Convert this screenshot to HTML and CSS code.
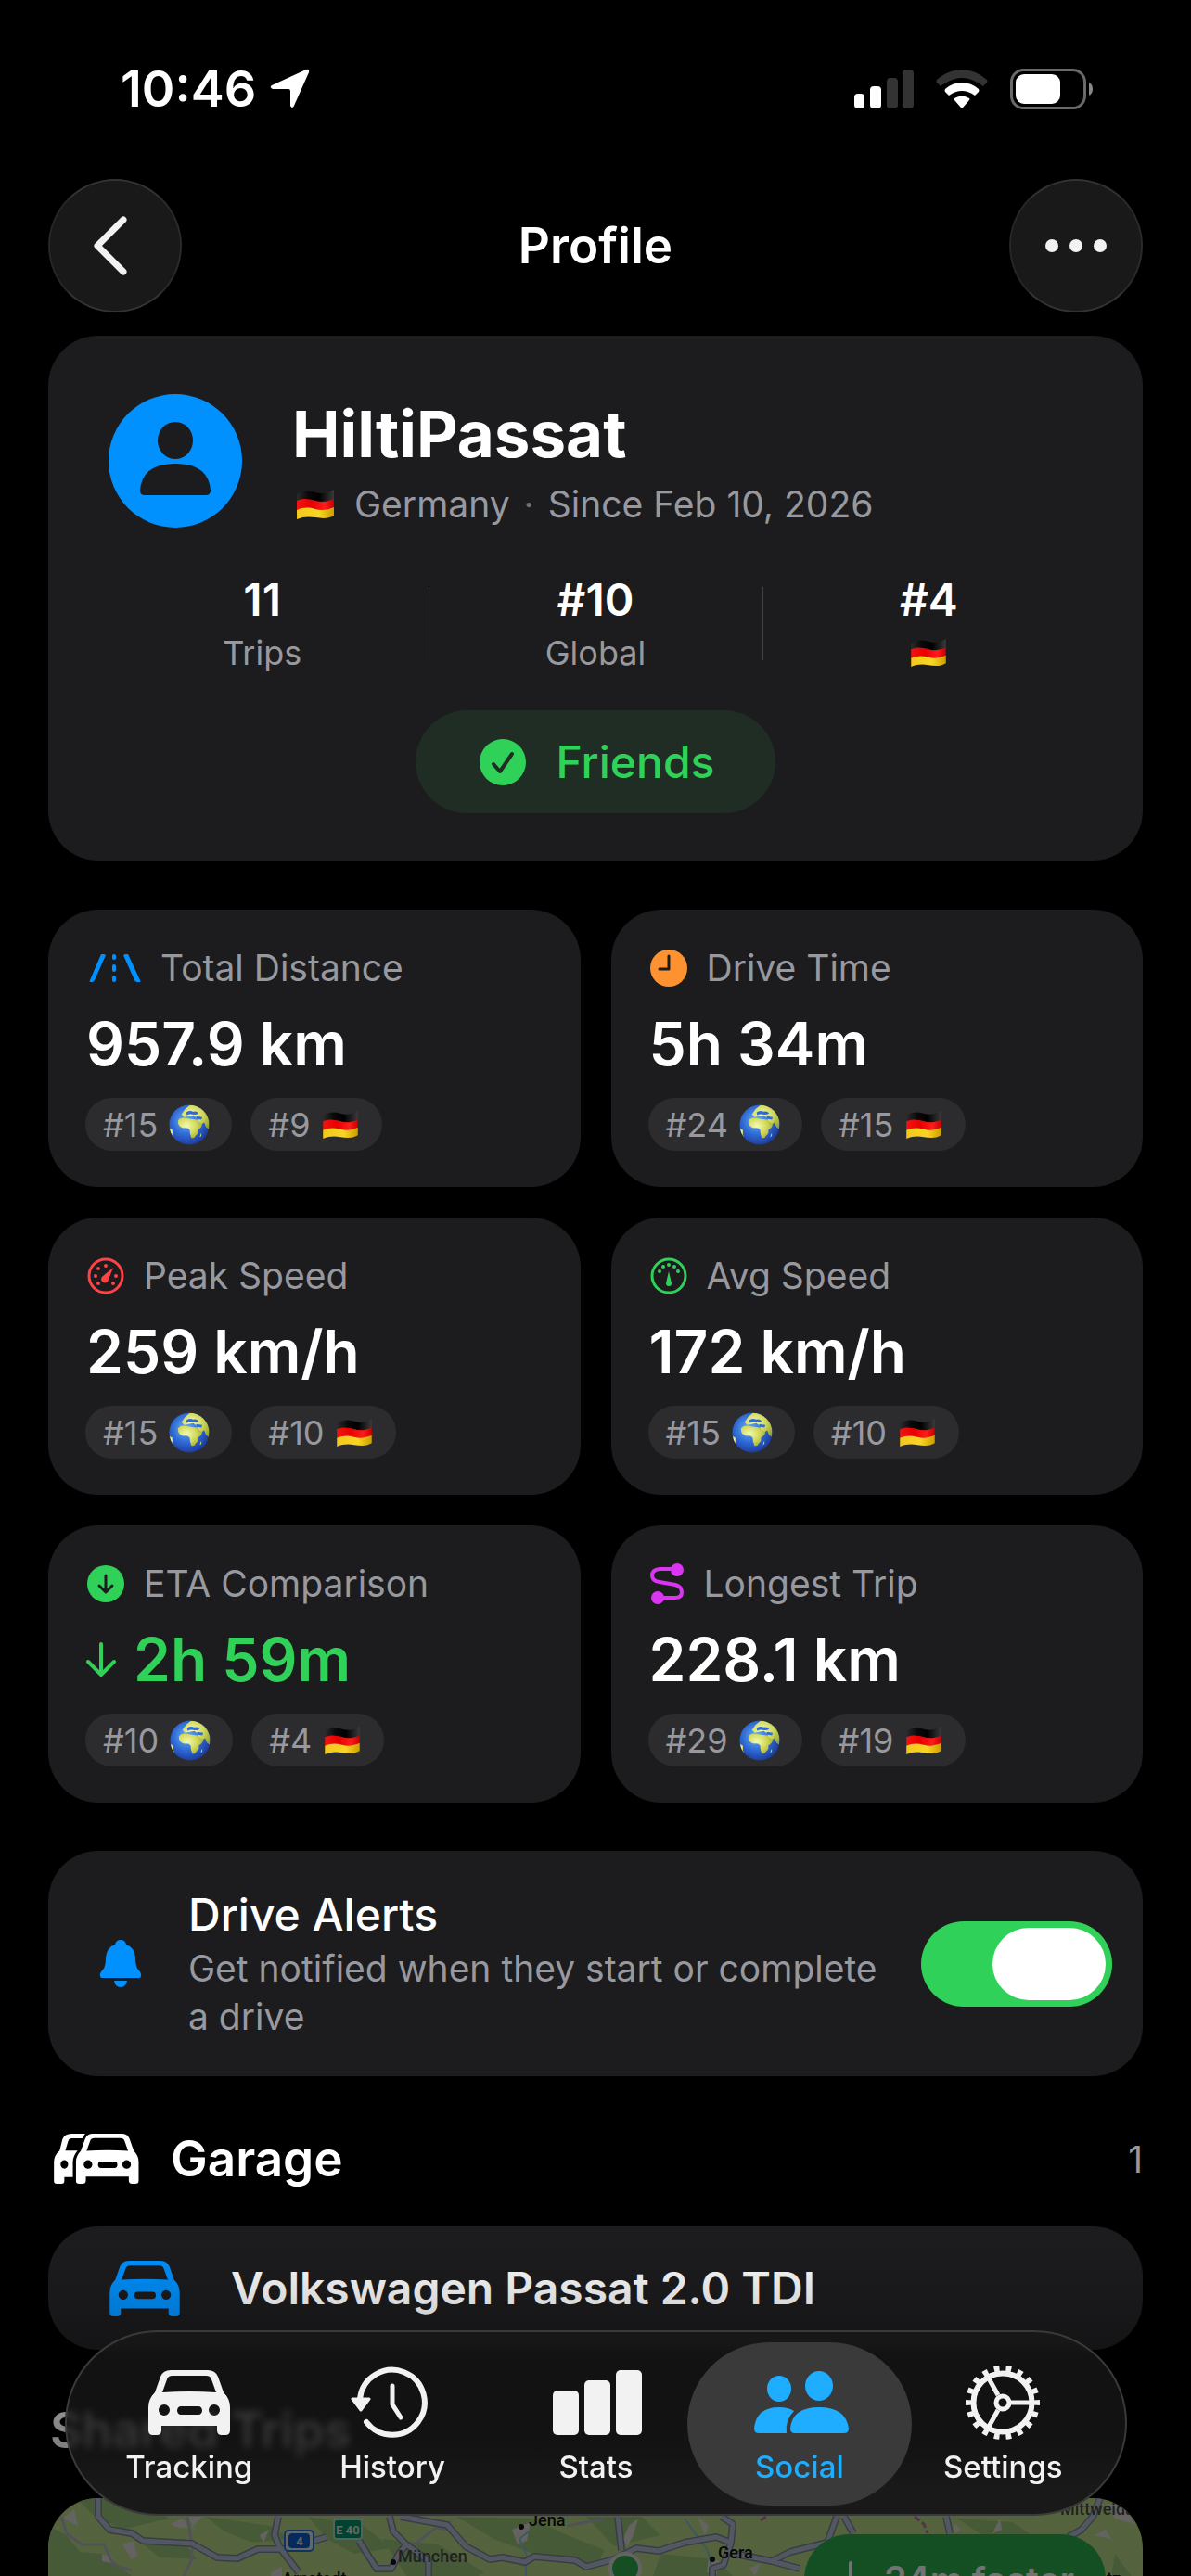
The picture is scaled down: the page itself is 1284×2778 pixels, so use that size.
FILE: index.html
```html
<!DOCTYPE html>
<html lang="en">
<head>
<meta charset="utf-8">
<meta name="viewport" content="width=device-width, initial-scale=1">
<title>Profile</title>
<link rel="stylesheet" href="styles.css">
</head>
<body>
<svg class="defs" aria-hidden="true">
  <defs>
    <linearGradient id="g-black" x1="0" x2="1"><stop offset="0" stop-color="#2b2b2b"/><stop offset=".3" stop-color="#0a0a0a"/><stop offset=".6" stop-color="#000"/><stop offset="1" stop-color="#3a3a3a"/></linearGradient>
    <linearGradient id="g-red" x1="0" x2="1"><stop offset="0" stop-color="#f01414"/><stop offset=".4" stop-color="#e80000"/><stop offset=".75" stop-color="#ff1c1c"/><stop offset="1" stop-color="#c80000"/></linearGradient>
    <linearGradient id="g-gold" x1="0" x2="1"><stop offset="0" stop-color="#f2c81c"/><stop offset=".6" stop-color="#fad524"/><stop offset="1" stop-color="#cc9d00"/></linearGradient>
    <radialGradient id="g-sea" cx=".42" cy=".4" r=".62"><stop offset="0" stop-color="#6fb4f2"/><stop offset=".55" stop-color="#2f6bd6"/><stop offset="1" stop-color="#1c3b9c"/></radialGradient>
    <radialGradient id="g-land" cx=".35" cy=".4" r=".8"><stop offset="0" stop-color="#f4fbb0"/><stop offset=".5" stop-color="#d3d95c"/><stop offset="1" stop-color="#8f9f2c"/></radialGradient>
    <clipPath id="c-globe"><circle cx="22.500" cy="22.500" r="22"/></clipPath>
    <symbol id="flag" viewBox="0 0 42 32">
      <path fill="url(#g-black)" d="M1 5C8 1 14 1 21 3S34 4 41 0V11C34 15 28 14 21 12S8 11 1 15Z"/>
      <path fill="url(#g-red)" d="M1 12C8 9 14 10 21 12S34 13 41 10V20C34 24 28 23 21 21S8 20 1 23Z"/>
      <path fill="url(#g-gold)" d="M1 22C8 19 14 19 21 21S34 22 41 19V28C34 32 28 31 21 30S8 29 1 32Z"/>
    </symbol>
    <symbol id="globe" viewBox="0 0 45 45">
      <circle cx="22.500" cy="22.500" r="22" fill="url(#g-sea)"/>
      <g clip-path="url(#c-globe)" fill="url(#g-land)">
        <path d="M10 18Q13 14 18 15L24 16L31 17Q33 21 37 22Q36 26 32 28Q33 32 30 34Q28 38 25 37Q23 33 23 28Q21 25 16 26Q10 25 10 18Z"/>
        <path d="M14 11L18 5L23 1H34L43 8L45 16L44 27L41 25L39 20L36 22L32 19L31 15L27 12L22 13L17 14Z"/>
        <path d="M0 26L4 28L4 33L6 39L0 36Z"/>
        <path d="M36 31L34 36L36 35Z"/>
      </g>
      <path d="M19 9Q22 6 27 8Q31 7 33 10Q30 12 26 11T20 12ZM30 13L37 14L36 17L31 16Z" fill="#2f6bd6"/>
    </symbol>
    <symbol id="car" viewBox="0 0 88 70">
      <path fill-rule="evenodd" d="M24 0H64Q72 0 75 7L81 24Q88 31 88 40V65Q88 70 83 70H79Q74 70 74 65V60H14V65Q14 70 9 70H5Q0 70 0 65V40Q0 31 7 24L13 7Q16 0 24 0ZM26 6Q21 6 20 10L15 24Q44 22 73 24L68 10Q67 6 62 6ZM17 37A6 6 0 1 0 17 49A6 6 0 1 0 17 37ZM71 37A6 6 0 1 0 71 49A6 6 0 1 0 71 37ZM35 39A4 4.500 0 0 0 35 48H54A4 4.500 0 0 0 54 39Z"/>
    </symbol>
  </defs>
</svg>

<div class="screen">
  <div class="status">
    <div class="status-left">
      <span class="time">10:46</span>
      <svg width="44" height="44" viewBox="0 0 44 44" fill="#fff"><path d="M40 1Q44 0 43 4L27 40Q25 44 23 40V24Q23 22 21 22H4Q0 20 3 18Z"/></svg>
    </div>
    <div class="status-right">
      <svg width="64" height="42" viewBox="0 0 64 42"><rect x="0" y="26" width="11" height="16" rx="4" fill="#fff"/><rect x="17" y="18" width="12" height="24" rx="4" fill="#fff"/><rect x="35" y="9" width="12" height="33" rx="4" fill="#333"/><rect x="52" y="0" width="12" height="42" rx="4" fill="#333"/></svg>
      <svg width="56" height="42" viewBox="0 0 56 42"><path fill="#333" d="M1 11Q14 0 28 0T55 11Q56 13 55 14L51 18Q39 9 28 9T5 18L1 14Q0 13 1 11Z"/><path fill="#fff" d="M10 21Q18 14 28 14T46 21Q47 23 46 24L42 28Q35 23 28 23T14 28L10 24Q9 23 10 21ZM20 31Q28 26 36 31Q37 32 36 33L29 41Q28 42 27 41L20 33Q19 32 20 31Z"/></svg>
      <svg width="90" height="44" viewBox="0 0 90 44"><rect x="1.500" y="1.500" width="79" height="41" rx="13" fill="none" stroke="#6a686a" stroke-width="3"/><rect x="6" y="6" width="48" height="32" rx="9" fill="#fff"/><path d="M85 15Q89 17 89 22T85 29Z" fill="#8a888a"/></svg>
    </div>
  </div>

  <header class="nav">
    <button class="round" type="button" aria-label="Back"><svg width="50" height="66" viewBox="0 0 50 66"><path d="M34 5L6 33L34 61" fill="none" stroke="#f2f2f2" stroke-width="7" stroke-linecap="round" stroke-linejoin="round"/></svg></button>
    <h1>Profile</h1>
    <button class="round" type="button" aria-label="More"><svg width="66" height="14" viewBox="0 0 66 14" fill="#f2f2f2"><circle cx="7" cy="7" r="7"/><circle cx="33" cy="7" r="7"/><circle cx="59" cy="7" r="7"/></svg></button>
  </header>

  <main>
    <section class="card profile">
      <div class="who">
        <svg width="144" height="144" viewBox="0 0 144 144"><circle cx="72" cy="72" r="72" fill="#0091ff"/><ellipse cx="72" cy="50" rx="19" ry="20" fill="#1c1c1e"/><path fill="#1c1c1e" d="M34 104Q36 75 72 75T110 104Q110 109 105 109H39Q34 109 34 104Z"/></svg>
        <div>
          <h2>HiltiPassat</h2>
          <p class="since"><svg width="44" height="32"><use href="#flag"/></svg><span>Germany</span><span class="dot">·</span><span>Since Feb 10, 2026</span></p>
        </div>
      </div>
      <div class="ranks">
        <div><strong>11</strong><span>Trips</span></div>
        <div><strong>#10</strong><span>Global</span></div>
        <div><strong>#4</strong><span><svg width="42" height="30"><use href="#flag"/></svg></span></div>
      </div>
      <button class="friends" type="button"><svg width="50" height="50" viewBox="0 0 50 50"><circle cx="25" cy="25" r="25" fill="#30d158"/><path d="M15 27L22 35L35 16" fill="none" stroke="#1f2d24" stroke-width="4" stroke-linecap="round" stroke-linejoin="round"/></svg>Friends</button>
    </section>

    <section class="grid">
      <article class="card stat">
        <h3><svg width="58" height="32" viewBox="0 0 58 32" fill="none" stroke="#0091ff" stroke-linecap="round"><path fill="#0091ff" stroke="none" d="M15 1H18L20 2L8 29Q7 31 5 31H3Q2 31 3 29ZM44 1H41L39 2L51 29Q52 31 54 31H57Q58 31 57 29Z"/><path stroke-width="4" d="M29 3V5M29 14V18M29 26V29"/></svg>Total Distance</h3>
        <p class="value">957.9 km</p>
        <ul><li>#15 <svg width="44" height="44"><use href="#globe"/></svg></li><li>#9 <svg width="42" height="30"><use href="#flag"/></svg></li></ul>
      </article>
      <article class="card stat">
        <h3><svg width="40" height="40" viewBox="0 0 40 40"><circle cx="20" cy="20" r="20" fill="#ff9230"/><path d="M20 7V21H10" fill="none" stroke="#1c1c1e" stroke-width="3" stroke-linecap="round" stroke-linejoin="round"/></svg>Drive Time</h3>
        <p class="value">5h 34m</p>
        <ul><li>#24 <svg width="44" height="44"><use href="#globe"/></svg></li><li>#15 <svg width="42" height="30"><use href="#flag"/></svg></li></ul>
      </article>
      <article class="card stat">
        <h3><svg width="40" height="40" viewBox="0 0 40 40" fill="#ff4245"><circle cx="20" cy="20" r="18" fill="none" stroke="#ff4245" stroke-width="3"/><path d="M28 11L23 24A4 4 0 1 1 17 20Z"/><circle cx="20" cy="9" r="2"/><circle cx="12" cy="12" r="2"/><circle cx="9" cy="20" r="2"/><circle cx="31" cy="20" r="2"/><circle cx="12" cy="28" r="2"/><circle cx="28" cy="28" r="2"/></svg>Peak Speed</h3>
        <p class="value">259 km/h</p>
        <ul><li>#15 <svg width="44" height="44"><use href="#globe"/></svg></li><li>#10 <svg width="42" height="30"><use href="#flag"/></svg></li></ul>
      </article>
      <article class="card stat">
        <h3><svg width="40" height="40" viewBox="0 0 40 40" fill="#30d158"><circle cx="20" cy="20" r="18" fill="none" stroke="#30d158" stroke-width="3"/><path d="M20 15L23 28A3 3 0 0 1 17 28Z"/><circle cx="20" cy="8" r="2"/><circle cx="14" cy="10" r="2"/><circle cx="26" cy="10" r="2"/><circle cx="10" cy="15" r="2"/><circle cx="30" cy="15" r="2"/></svg>Avg Speed</h3>
        <p class="value">172 km/h</p>
        <ul><li>#15 <svg width="44" height="44"><use href="#globe"/></svg></li><li>#10 <svg width="42" height="30"><use href="#flag"/></svg></li></ul>
      </article>
      <article class="card stat">
        <h3><svg width="40" height="40" viewBox="0 0 40 40"><circle cx="20" cy="20" r="20" fill="#30d158"/><path d="M20 11V29M13 22L20 29L27 22" fill="none" stroke="#1c1c1e" stroke-width="3" stroke-linecap="round" stroke-linejoin="round"/></svg>ETA Comparison</h3>
        <p class="value good"><svg width="32" height="38" viewBox="0 0 32 38"><path d="M16 2V35M2 21L16 35L30 21" fill="none" stroke="#30d158" stroke-width="4" stroke-linecap="round" stroke-linejoin="round"/></svg>2h 59m</p>
        <ul><li>#10 <svg width="44" height="44"><use href="#globe"/></svg></li><li>#4 <svg width="42" height="30"><use href="#flag"/></svg></li></ul>
      </article>
      <article class="card stat">
        <h3><svg width="37" height="44" viewBox="0 0 37 44"><path d="M29 6H10Q2 7 2 13T10 20L27 23Q34 25 34 31T27 37H8" fill="none" stroke="#db34f2" stroke-width="4"/><circle cx="29" cy="7" r="7" fill="#db34f2"/><circle cx="8" cy="37" r="7" fill="#db34f2"/></svg>Longest Trip</h3>
        <p class="value">228.1 km</p>
        <ul><li>#29 <svg width="44" height="44"><use href="#globe"/></svg></li><li>#19 <svg width="42" height="30"><use href="#flag"/></svg></li></ul>
      </article>
    </section>

    <section class="card alerts">
      <svg width="54" height="52" viewBox="0 0 54 52" fill="#0091ff"><path d="M27 0Q32 0 33 5Q42 8 43 19Q43 29 46 32Q50 36 49 39Q49 41 46 41H8Q5 41 5 39Q4 36 8 32Q11 29 11 19Q12 8 21 5Q22 0 27 0ZM20 44H34Q33 51 27 51T20 44Z"/></svg>
      <label for="alerts"><strong>Drive Alerts</strong><span>Get notified when they start or complete a drive</span></label>
      <input id="alerts" class="switch" type="checkbox" role="switch" checked>
    </section>

    <div class="heading">
      <svg width="92" height="54" viewBox="0 0 90 53" fill="#fff"><path fill-rule="evenodd" d="M33 0H19Q11 0 9 6L6 18Q0 23 0 30V50Q0 53 3 53H8Q11 53 11 50V46H20V30Q20 24 25 18L12 18L15 8Q16 5 19 5H30ZM11 28A4 4.500 0 1 0 11 37A4 4.500 0 1 0 11 28Z"/><svg x="23" y="0" width="67" height="53"><use href="#car"/></svg></svg>
      <h2>Garage</h2>
      <span class="count">1</span>
    </div>
    <section class="card vehicle">
      <svg width="76" height="60" fill="#0091ff"><use href="#car"/></svg>
      <strong>Volkswagen Passat 2.0 TDI</strong>
    </section>

    <div class="heading shared"><h2>Shared Trips</h2></div>
    <section class="map">
      <svg class="terrain" width="1180" height="260" viewBox="0 0 1180 260" preserveAspectRatio="xMidYMin slice" aria-hidden="true">
        <rect width="1180" height="260" fill="#bbdc88"/>
        <g fill="#9cc87c">
          <path d="M0 30L20 40L34 58L60 60L90 84L120 100V260H0Z"/><path d="M30 0H110L130 22L80 34L50 20Z"/><path d="M90 40L150 52L160 66L120 64ZM170 20L240 30L260 44L220 48L190 36Z"/>
          <path d="M280 20L340 30L370 54L330 60L300 44ZM360 44L420 50L470 80L440 100L390 90Z"/><path d="M440 20L520 22L560 40L600 56L590 76L540 66L480 44Z"/><path d="M580 20H640L660 40L610 52ZM660 60L720 66L740 86L690 100L650 90Z"/><path d="M980 22L1040 26L1060 40L1010 42ZM1150 60L1172 90L1160 110L1146 84Z"/>
        </g>
        <g fill="#dedcd6">
          <path d="M16 22L28 12L32 30ZM132 28L144 22L158 34L150 20H166L154 32L140 32ZM80 50L92 46L96 62L90 66ZM58 60L70 64L68 70L58 68ZM228 40L238 34L232 48ZM240 80L252 74V90H240Z"/>
          <path d="M500 34L520 26L516 46L506 50ZM620 44L626 30L636 22L630 42L624 52ZM700 20L712 30L708 40ZM976 26L984 34L978 38ZM1018 38L1026 22L1028 34ZM1128 40L1140 34L1146 44ZM756 76L768 70L762 84ZM1140 6L1160 8L1172 28L1150 22ZM712 64L724 68L720 84L710 80Z"/>
        </g>
        <path d="M686 22Q700 42 708 52T716 100M518 36L508 44L516 62L514 100" fill="none" stroke="#86c1d8" stroke-width="2"/>
        <g fill="none" stroke="#b4b6c4" stroke-width="3">
          <path d="M14 20L20 38L36 50L60 50L70 72L90 78M150 20L155 50V66L146 84M392 52L418 32L430 34L434 24M560 30L600 22"/>
        </g>
        <path d="M934 20L944 28L948 38M768 24L774 20" fill="none" stroke="#b07a9c" stroke-width="3" stroke-dasharray="7 3"/>
        <g fill="none" stroke="#7d8699" stroke-width="8" stroke-linejoin="round">
          <path id="roads" d="M54 0V20L66 34L90 38L102 46L155 49L182 64L204 65L226 55H256L300 42M248 20L244 40L250 54L270 80M335 46L354 76H370L378 60L386 50L372 36L368 20M386 50L410 68V90M380 20L430 29L450 52L476 66L490 64L514 69L524 63L568 67L580 74L610 66L634 54L658 57L686 48L720 42L736 48L738 28L726 20M736 48L728 72L716 76V100M740 60L780 68L810 76M780 68L800 58L840 48L850 20M858 20L868 38M614 20L618 56M968 20L972 38M1134 0L1126 20L1114 34L1100 42"/>
        </g>
        <use href="#roads" fill="none" stroke="#b6c1d8" stroke-width="5" stroke-linejoin="round"/>
        <g class="places">
          <circle cx="510" cy="31" r="3"/><text x="518" y="30">Jena</text>
          <circle cx="372" cy="69" r="3"/><text class="quiet" x="377" y="69">München</text>
          <text x="252" y="93">Arnstadt</text>
          <circle cx="716" cy="66" r="3"/><text x="722" y="65">Gera</text>
          <text class="quiet" x="1091" y="18">Mittweida</text>
          <text x="1141" y="93">tz</text>
        </g>
        <rect x="255" y="35" width="31" height="22" rx="4" fill="#dbe4ea" stroke="#2273d8" stroke-width="2"/><rect x="259" y="38" width="23" height="16" rx="4" fill="#0b5fd0"/><text class="shield" x="271" y="51">4</text>
        <rect x="308" y="23" width="30" height="21" rx="3" fill="#00956a" stroke="#b6dcc8" stroke-width="2"/><text class="shield" x="323" y="39">E 40</text>
        <circle cx="622" cy="76" r="16" fill="#2cae4c" stroke="#dcdcdc" stroke-width="4"/>
      </svg>
      <div class="faster"><svg width="32" height="38" viewBox="0 0 32 38"><path d="M16 2V35M2 21L16 35L30 21" fill="none" stroke="#fff" stroke-width="4" stroke-linecap="round" stroke-linejoin="round"/></svg>24m faster</div>
    </section>
  </main>

  <div class="fade"></div>
  <nav class="tabs">
    <a href="#tracking"><svg width="88" height="80" viewBox="0 0 88 70" fill="#f2f2f2"><use href="#car"/></svg>Tracking</a>
    <a href="#history"><svg width="90" height="80" viewBox="-1 -2 90 80" fill="none" stroke="#f2f2f2" stroke-width="6" stroke-linecap="round" stroke-linejoin="round"><path d="M9 34A35 35 0 1 1 16 59"/><path stroke-width="5" d="M44 20V40L53 54"/><path fill="#f2f2f2" stroke-width="3" d="M1 34H19L10 46Z"/></svg>History</a>
    <a href="#stats"><svg width="100" height="80" viewBox="-4 0 100 80" fill="#f2f2f2"><rect x="0" y="27" width="28" height="48" rx="5"/><rect x="34" y="16" width="28" height="59" rx="5"/><rect x="68" y="5" width="28" height="70" rx="5"/></svg>Stats</a>
    <a href="#social" class="on" aria-current="page"><svg width="106" height="80" viewBox="-4 -6 106 80" fill="#1eadff"><ellipse cx="27" cy="19" rx="13" ry="14"/><ellipse cx="70" cy="16" rx="15" ry="16"/><path d="M39 62Q41 39 70 39T102 62Q102 67 97 67H44Q39 67 39 62ZM0 62Q2 39 27 39Q37 39 43 43Q33 53 35 67H5Q0 67 0 62Z"/></svg>Social</a>
    <a href="#settings"><svg width="82" height="80" viewBox="0 0 82 80" fill="none" stroke="#f2f2f2"><circle cx="41" cy="40" r="36.500" stroke-width="7" pathLength="18" stroke-dasharray=".45 .55" stroke-dashoffset=".225"/><circle cx="41" cy="40" r="31.500" stroke-width="6"/><circle cx="41" cy="40" r="7" stroke-width="5"/><path stroke-width="5" d="M50 40H71M36 32L26 14M36 48L26 66"/></svg>Settings</a>
  </nav>
</div>
</body>
</html>
```

FILE: styles.css
```css
* { box-sizing: border-box; margin: 0; padding: 0; }

body {
  background: #000;
  color: #fff;
  font-family: Inter, "Liberation Sans", sans-serif;
}

.defs { position: absolute; width: 0; height: 0; }
svg { flex: none; display: block; }
button { border: 0; font: inherit; }
ul { list-style: none; }

.screen { position: relative; height: 100vh; overflow: hidden; }

.status {
  display: flex;
  justify-content: space-between;
  align-items: center;
  padding: 64px 105px 65px 130px;
}
.status-left { display: flex; align-items: center; gap: 14px; }
.status-right { display: flex; align-items: center; gap: 24px; }
.time { font-size: 54px; font-weight: 600; line-height: 64px; }

.nav {
  display: flex;
  justify-content: space-between;
  align-items: center;
  padding: 0 52px;
}
.nav h1 { font-size: 53px; font-weight: 600; line-height: 64px; }
.round {
  display: grid;
  place-items: center;
  width: 144px;
  height: 144px;
  border-radius: 72px;
  border: 2px solid #333;
  border-left-color: #262626;
  border-right-color: #2a2a2a;
  background: #191919;
}

main { padding: 25px 52px 0; }

.card { background: #1c1c1e; border-radius: 54px; }

.profile {
  display: flex;
  flex-direction: column;
  align-items: stretch;
  padding: 63px 51px 51px;
}
.who { display: flex; align-items: center; gap: 54px; padding-left: 14px; }
.who h2 { font-size: 69px; font-weight: 700; line-height: 84px; }
.since {
  display: flex;
  align-items: center;
  gap: 15px;
  margin-top: 10px;
  color: #98989f;
  font-size: 39px;
  line-height: 48px;
}
.since svg { margin: 0 5px 0 3px; }
.dot { color: #6e6e74; }
.ranks { display: grid; grid-template-columns: repeat(3, 1fr); margin-top: 48px; }
.ranks div { position: relative; display: flex; flex-direction: column; align-items: center; }
.ranks div + div::before {
  content: "";
  position: absolute;
  left: 0;
  top: 16px;
  bottom: 18px;
  width: 1px;
  background: #414144;
}
.ranks strong { font-size: 48px; font-weight: 600; line-height: 60px; }
.ranks span {
  display: flex;
  align-items: center;
  height: 53px;
  color: #98989f;
  font-size: 36px;
  line-height: 52px;
}
.friends {
  display: flex;
  align-items: center;
  align-self: center;
  gap: 33px;
  height: 111px;
  margin-top: 36px;
  padding: 0 66px 0 69px;
  border-radius: 56px;
  background: #1f2d24;
  color: #30d158;
  font-size: 48px;
  font-weight: 500;
}

.grid {
  display: grid;
  grid-template-columns: 1fr 1fr;
  gap: 33px;
  margin-top: 53px;
}
.stat { padding: 39px 40px 38px; }
.stat h3 {
  display: flex;
  align-items: center;
  gap: 21px;
  height: 48px;
  padding-left: 2px;
  color: #98989f;
  font-size: 39px;
  font-weight: 400;
  line-height: 48px;
}
.value {
  display: flex;
  align-items: center;
  gap: 19px;
  margin-top: 18px;
  padding-left: 1px;
  font-size: 64px;
  font-weight: 600;
  line-height: 80px;
}
.good { color: #30d158; }
.stat ul { display: flex; gap: 20px; margin-top: 18px; }
.stat li {
  display: flex;
  align-items: center;
  gap: 12px;
  height: 57px;
  margin-bottom: 1px;
  padding: 0 24px 0 19px;
  border-radius: 29px;
  background: #2c2c2e;
  color: #98989f;
  font-size: 36px;
}

.alerts {
  display: flex;
  align-items: center;
  margin-top: 52px;
  padding: 39px 33px 38px 51px;
}
.alerts label { flex: 1; margin: 0 40px 0 46px; }
.alerts strong { display: block; margin-bottom: 2px; font-size: 48px; font-weight: 500; line-height: 60px; }
.alerts span { display: block; color: #98989f; font-size: 39px; line-height: 52px; }
.switch {
  appearance: none;
  flex: none;
  display: flex;
  justify-content: flex-end;
  width: 206px;
  height: 92px;
  padding: 7px;
  border-radius: 46px;
  background: #30d158;
}
.switch::before { content: ""; width: 122px; border-radius: 39px; background: #fff; }
.switch:not(:checked) { justify-content: flex-start; background: #39393d; }

.heading {
  display: flex;
  align-items: center;
  gap: 34px;
  margin: 57px 0 41px;
  padding-left: 6px;
}
.heading h2 { font-size: 53px; font-weight: 600; line-height: 64px; }
.count { margin-left: auto; color: #98989f; font-size: 39px; }
.shared { margin: 55px 0 41px; padding-left: 2px; }

.vehicle { display: flex; align-items: center; gap: 55px; height: 133px; padding-left: 66px; }
.vehicle strong { font-size: 48px; font-weight: 600; }

.map {
  position: relative;
  display: flex;
  justify-content: flex-end;
  height: 260px;
  padding: 39px 40px;
  border-radius: 54px;
  overflow: hidden;
}
.terrain { position: absolute; left: 0; top: 0; width: 100%; height: 100%; }
.places { font-family: Roboto, Inter, sans-serif; font-size: 18px; font-weight: 500; fill: #111; }
.quiet { fill: #4a4a4a; }
.shield { font-family: Roboto, Inter, sans-serif; font-size: 13px; font-weight: 600; fill: #dfe8e4; text-anchor: middle; }
.faster {
  position: relative;
  display: flex;
  align-items: center;
  gap: 20px;
  height: 96px;
  padding: 0 34px;
  border-radius: 48px;
  background: #2bb04c;
  font-size: 39px;
  font-weight: 600;
}

.fade {
  position: absolute;
  left: 0;
  right: 0;
  bottom: 0;
  height: 360px;
  background: linear-gradient(rgba(0, 0, 0, 0), rgba(0, 0, 0, .2) 90px, rgba(0, 0, 0, .48) 200px, rgba(0, 0, 0, .55) 270px);
  pointer-events: none;
}

.tabs {
  position: absolute;
  left: 70px;
  right: 69px;
  bottom: 65px;
  display: grid;
  grid-template-columns: repeat(5, 1fr);
  padding: 36px 22px 31px;
  border: 2px solid #3a3a3a;
  border-radius: 100px;
  background: linear-gradient(rgba(25, 25, 25, .72) 60%, #191919 85%);
  backdrop-filter: blur(4px);
}
.tabs a {
  position: relative;
  display: flex;
  flex-direction: column;
  align-items: center;
  gap: 9px;
  color: #f2f2f2;
  font-size: 33px;
  font-weight: 500;
  line-height: 40px;
  text-decoration: none;
}
.tabs a svg { position: relative; }
.tabs .on { color: #1eadff; z-index: 0; }
.tabs .on::before {
  content: "";
  position: absolute;
  z-index: -1;
  inset: -25px -11px -22px;
  border-radius: 88px;
  background: #3a3a3a;
}
```
